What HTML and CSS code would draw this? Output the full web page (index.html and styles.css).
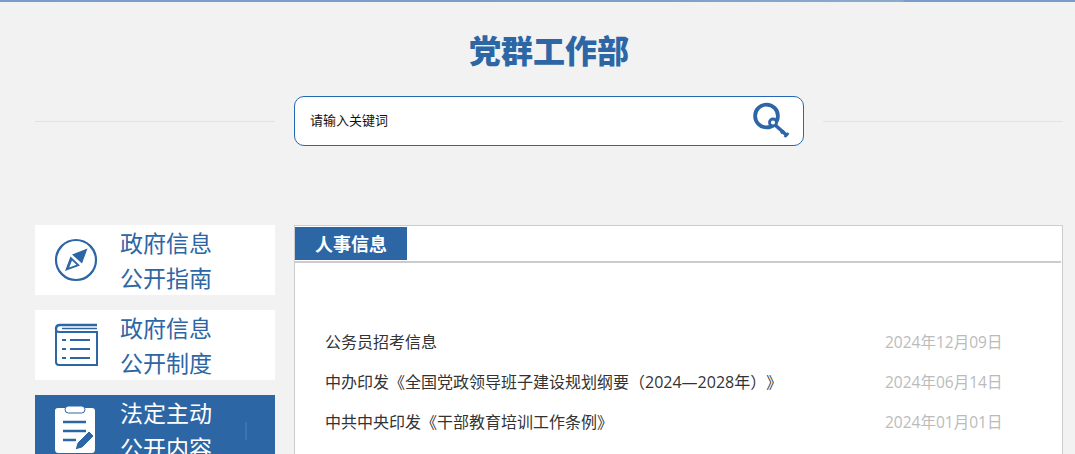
FILE: index.html
```html
<!DOCTYPE html>
<html lang="zh-CN">
<head>
<meta charset="utf-8">
<title>党群工作部</title>
<link rel="stylesheet" href="styles.css">
</head>
<body>
<div class="topbar"></div>
<div class="page">
  <h1 class="title">党群工作部</h1>
  <div class="search-row">
    <div class="rule"></div>
    <div class="search">
      <span class="search-text">请输入关键词</span>
      <svg class="search-icon" width="38" height="38" viewBox="0 0 38 38">
        <circle cx="13.500" cy="15" r="11.400" fill="none" stroke="#2d66a5" stroke-width="3.800"/>
        <path d="M21 23 L34.500 35" stroke="#2d66a5" stroke-width="3.600" fill="none"/>
        <path d="M28 32.500 L31 29.500 M31.500 36 L35.500 32" stroke="#2d66a5" stroke-width="2.400" fill="none"/>
        <circle cx="20" cy="21.500" r="3.500" fill="#fff" stroke="#2d66a5" stroke-width="2.800"/>
      </svg>
    </div>
    <div class="rule"></div>
  </div>
  <div class="content">
    <nav class="side">
      <a class="side-item">
        <svg class="side-icon" width="44" height="44" viewBox="0 0 44 44">
          <circle cx="22" cy="22" r="20" fill="none" stroke="#2d66a5" stroke-width="2.200"/>
          <path d="M33.500 10.500 L18 16.500 L28 25.500 Z" fill="#2d66a5"/>
          <path d="M16.500 18.500 L11 33 L26 27.500 Z M18 22.500 L15.200 29.500 L22.500 26.700 Z" fill="#2d66a5" fill-rule="evenodd"/>
        </svg>
        <span class="side-label">政府信息<br>公开指南</span>
      </a>
      <a class="side-item">
        <svg class="side-icon" width="44" height="44" viewBox="0 0 44 44">
          <path d="M43 9 H5 Q2 9 2 6 V39 Q2 42 5 42 H43 Z" fill="none" stroke="#2d66a5" stroke-width="2"/>
          <path d="M2 6 Q2 2 6 2 H43" fill="none" stroke="#2d66a5" stroke-width="2.500"/>
          <path d="M8 5.500 H43" stroke="#2d66a5" stroke-width="1.500"/>
          <path d="M8 17 H12 M16 17 H36 M8 26 H12 M16 26 H36 M8 35 H12 M16 35 H36" stroke="#2d66a5" stroke-width="2"/>
        </svg>
        <span class="side-label">政府信息<br>公开制度</span>
      </a>
      <a class="side-item active">
        <svg class="side-icon" width="44" height="50" viewBox="0 0 44 50">
          <path d="M4 3 H12 V7 H30 V3 H38 Q41 3 41 6 V44 Q41 48 38 48 H4 Q1 48 1 44 V6 Q1 3 4 3 Z" fill="#fff"/>
          <rect x="11" y="1" width="20" height="7" rx="3.500" fill="#fff" stroke="#2d66a5" stroke-width="1"/>
          <path d="M9 17 H32 M9 26 H32 M9 35 H22" stroke="#2d66a5" stroke-width="2.400"/>
          <path d="M21 45 L23 38 L35 26 L40 31 L28 43 Z" fill="#2d66a5" stroke="#fff" stroke-width="1"/>
        </svg>
        <span class="side-label">法定主动<br>公开内容</span>
        <span class="side-mark"></span>
      </a>
    </nav>
    <main class="panel">
      <div class="panel-head"><span class="panel-tab">人事信息</span></div>
      <ul class="news">
        <li class="news-row"><a class="news-title">公务员招考信息</a><span class="news-date">2024年12月09日</span></li>
        <li class="news-row"><a class="news-title">中办印发《全国党政领导班子建设规划纲要（2024—2028年）》</a><span class="news-date">2024年06月14日</span></li>
        <li class="news-row"><a class="news-title">中共中央印发《干部教育培训工作条例》</a><span class="news-date">2024年01月01日</span></li>
      </ul>
    </main>
  </div>
</div>
</body>
</html>
```

FILE: styles.css
```css
* { box-sizing: border-box; }
html, body { margin: 0; padding: 0; height: 454px; overflow: hidden; }
body {
  background: #f2f2f2;
  font-family: "Open Sans", "Noto Sans CJK SC", sans-serif;
  color: #333;
  text-spacing-trim: space-all;
}
.topbar {
  height: 2px;
  background: linear-gradient(90deg, #7a9ccb 0%, #7f9fc8 60%, #8cabcc 84%, #7a9ccb 84.1%, #7a9ccb 100%);
}
.page { padding: 0 12px 0 35px; }
.title {
  margin: 23px 0 0;
  height: 51px;
  line-height: 48px;
  text-align: center;
  font-size: 32px;
  font-weight: 900;
  color: #2d66a5;
  font-family: "Noto Sans CJK SC", sans-serif;
}
.search-row {
  margin-top: 20px;
  display: flex;
  align-items: center;
  gap: 19px;
}
.rule { flex: 1; height: 1px; background: #e2e2e2; }
.search {
  width: 510px;
  height: 50px;
  background: #fff;
  border: 1px solid #2468b4;
  border-radius: 10px;
  display: flex;
  align-items: center;
  justify-content: space-between;
  padding: 0 12px 0 15px;
}
.search-text {
  font-size: 13px;
  line-height: 19px;
  margin-bottom: 4px;
  color: #111;
  font-family: "Noto Sans CJK SC", sans-serif;
}
.search-icon { display: block; margin-bottom: 2px; }
.content { margin-top: 79px; display: flex; gap: 19px; align-items: flex-start; }
.side { width: 240px; flex: none; display: flex; flex-direction: column; gap: 15px; }
.side-item {
  height: 70px;
  background: #fff;
  display: flex;
  align-items: center;
  color: #2d66a5;
  padding-left: 19px;
  overflow: hidden;
  position: relative;
}
.side-item.active { background: #2d66a5; color: #fff; }
.side-icon { flex: none; display: block; }
.side-label {
  margin-left: 22px;
  margin-bottom: 1px;
  font-size: 23px;
  line-height: 35px;
  font-family: "Noto Sans CJK SC", sans-serif;
}
.side-mark {
  position: absolute;
  left: 210px;
  top: 27px;
  width: 2px;
  height: 18px;
  background: #4073ac;
}
.panel {
  flex: 1;
  height: 300px;
  background: #fff;
  border: 1px solid #ccc;
}
.panel-head { height: 36px; border-bottom: 2px solid #ccc; margin-right: 1px; }
.panel-tab {
  display: block;
  width: 112px;
  height: 33px;
  margin-top: 1px;
  background: #2d66a5;
  color: #fff;
  font-weight: 700;
  font-size: 18px;
  line-height: 33px;
  text-align: center;
  font-family: "Noto Sans CJK SC", sans-serif;
}
.news { list-style: none; margin: 58px 0 0; padding: 0 60px 0 30px; }
.news-row {
  height: 40px;
  display: flex;
  align-items: center;
  justify-content: space-between;
  font-size: 16px;
}
.news-title { color: #333; }
.news-date { width: 117px; font-size: 15.500px; color: #bbb; white-space: nowrap; }
```
